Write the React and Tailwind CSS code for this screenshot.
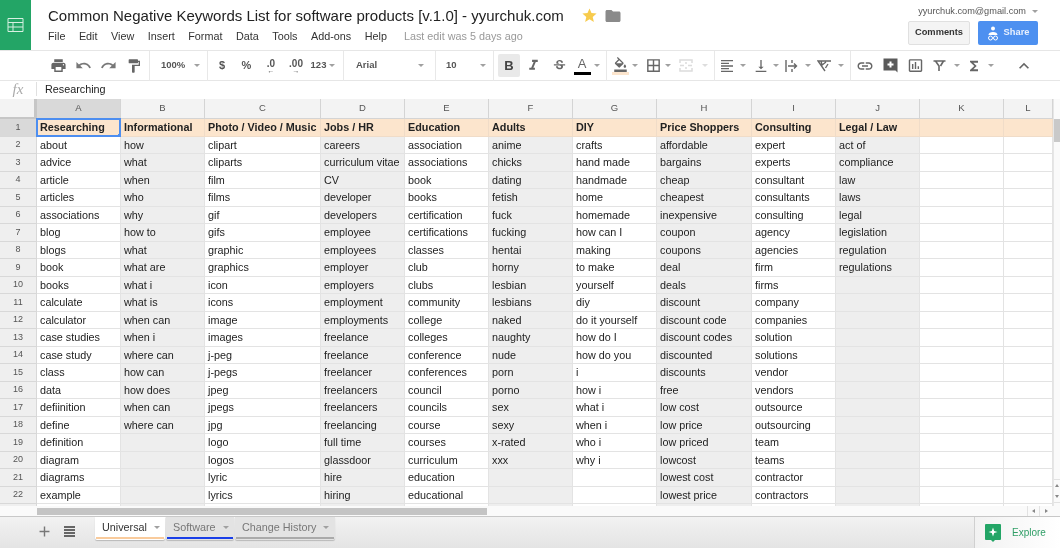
import React from "react";
import {
  MdPrint, MdUndo, MdRedo, MdFormatPaint, MdFormatItalic, MdStrikethroughS, MdFormatColorFill,
  MdBorderAll, MdFormatAlignLeft, MdVerticalAlignBottom, MdLink, MdInsertChartOutlined,
  MdKeyboardArrowUp, MdStar, MdFolder, MdAdd, MdFunctions,
} from "react-icons/md";

const columns = [
  ["Researching", "about", "advice", "article", "articles", "associations", "blog", "blogs", "book", "books", "calculate", "calculator", "case studies", "case study", "class", "data", "defiinition", "define", "definition", "diagram", "diagrams", "example"],
  ["Informational", "how", "what", "when", "who", "why", "how to", "what", "what are", "what i", "what is", "when can", "when i", "where can", "how can", "how does", "when can", "where can"],
  ["Photo / Video / Music", "clipart", "cliparts", "film", "films", "gif", "gifs", "graphic", "graphics", "icon", "icons", "image", "images", "j-peg", "j-pegs", "jpeg", "jpegs", "jpg", "logo", "logos", "lyric", "lyrics"],
  ["Jobs / HR", "careers", "curriculum vitae", "CV", "developer", "developers", "employee", "employees", "employer", "employers", "employment", "employments", "freelance", "freelance", "freelancer", "freelancers", "freelancers", "freelancing", "full time", "glassdoor", "hire", "hiring"],
  ["Education", "association", "associations", "book", "books", "certification", "certifications", "classes", "club", "clubs", "community", "college", "colleges", "conference", "conferences", "council", "councils", "course", "courses", "curriculum", "education", "educational"],
  ["Adults", "anime", "chicks", "dating", "fetish", "fuck", "fucking", "hentai", "horny", "lesbian", "lesbians", "naked", "naughty", "nude", "porn", "porno", "sex", "sexy", "x-rated", "xxx"],
  ["DIY", "crafts", "hand made", "handmade", "home", "homemade", "how can I", "making", "to make", "yourself", "diy", "do it yourself", "how do I", "how do you", "i", "how i", "what i", "when i", "who i", "why i"],
  ["Price Shoppers", "affordable", "bargains", "cheap", "cheapest", "inexpensive", "coupon", "coupons", "deal", "deals", "discount", "discount code", "discount codes", "discounted", "discounts", "free", "low cost", "low price", "low priced", "lowcost", "lowest cost", "lowest price"],
  ["Consulting", "expert", "experts", "consultant", "consultants", "consulting", "agency", "agencies", "firm", "firms", "company", "companies", "solution", "solutions", "vendor", "vendors", "outsource", "outsourcing", "team", "teams", "contractor", "contractors"],
  ["Legal / Law", "act of", "compliance", "law", "laws", "legal", "legislation", "regulation", "regulations"],
  [],
  [],
];
const letters = ["A", "B", "C", "D", "E", "F", "G", "H", "I", "J", "K", "L"];
const menus = ["File", "Edit", "View", "Insert", "Format", "Data", "Tools", "Add-ons", "Help"];
const rowNumbers = Array.from({ length: 23 }, (_, i) => i + 1);

function Caret({ light }) {
  return <span className={`inline-block border-x-[3px] border-t-[3px] border-x-transparent ${light ? "border-t-[#dddddd]" : "border-t-[#a0a0a0]"}`} />;
}

function Slot({ w, children }) {
  return <div className={`flex h-full shrink-0 items-center justify-center ${w}`}>{children}</div>;
}

function Group({ w, children }) {
  return <div className={`flex h-[30px] shrink-0 items-center border-r border-[#e8e8e8] ${w}`}>{children}</div>;
}

function Toolbar() {
  const ic = "text-[#666666]";
  return (
    <div className="flex h-[31px] shrink-0 items-center border-y border-[#e6e6e6] bg-white text-[#555555]">
      <Group w="w-[150px] pl-[46px]">
        <Slot w="w-[25px]"><MdPrint size={17} className={ic} /></Slot>
        <Slot w="w-[25px]"><MdUndo size={17} className="text-[#777777]" /></Slot>
        <Slot w="w-[25px]"><MdRedo size={17} className="text-[#777777]" /></Slot>
        <Slot w="w-[25px]"><MdFormatPaint size={16} className={ic} /></Slot>
      </Group>
      <Group w="w-[58px] pl-[11px] gap-[9px]">
        <span className="text-[9.500px] font-bold">100%</span>
        <Caret />
      </Group>
      <Group w="w-[136px] pl-[2px]">
        <Slot w="w-[24px]"><span className="text-[11px] font-bold">$</span></Slot>
        <Slot w="w-[25px]"><span className="text-[11px] font-bold">%</span></Slot>
        <Slot w="w-[24px]">
          <span className="flex flex-col items-center text-[10px] font-bold leading-[9px]">.0<span className="text-[7px] leading-[5px]">←</span></span>
        </Slot>
        <Slot w="w-[26px]">
          <span className="flex flex-col items-center text-[10px] font-bold leading-[9px]">.00<span className="text-[7px] leading-[5px]">→</span></span>
        </Slot>
        <Slot w="w-[28px]">
          <span className="flex items-center gap-[3px] text-[9.500px] font-bold">123<Caret /></span>
        </Slot>
      </Group>
      <Group w="w-[92px] pl-[12px] gap-[40px]">
        <span className="w-[22px] text-[9.500px] font-bold">Arial</span>
        <Caret />
      </Group>
      <Group w="w-[58px] pl-[10px] gap-[22px]">
        <span className="w-[12px] text-[9.500px] font-bold">10</span>
        <Caret />
      </Group>
      <Group w="w-[113px] pl-[4px]">
        <div className="flex h-[23px] w-[22px] shrink-0 items-center justify-center rounded-[2px] bg-[#e9e9e9] text-[13px] font-bold text-[#444444]">B</div>
        <Slot w="w-[26px]"><MdFormatItalic size={17} className={ic} /></Slot>
        <Slot w="w-[26px]"><MdStrikethroughS size={15} className={ic} /></Slot>
        <Slot w="w-[20px]">
          <span className="flex flex-col items-center pt-[1px]">
            <span className="text-[13px] leading-[13px] text-[#666666]">A</span>
            <span className="mt-[2px] h-[3px] w-[17px] bg-black" />
          </span>
        </Slot>
        <Slot w="w-[10px]"><Caret /></Slot>
      </Group>
      <Group w="w-[108px] pl-[4px]">
        <Slot w="w-[18px]">
          <span className="flex flex-col items-center">
            <MdFormatColorFill size={15} className={ic} />
            <span className="h-[3px] w-[17px] bg-[#fce5cd]" />
          </span>
        </Slot>
        <Slot w="w-[12px]"><Caret /></Slot>
        <Slot w="w-[24px]"><MdBorderAll size={17} className={ic} /></Slot>
        <Slot w="w-[6px]"><Caret /></Slot>
        <Slot w="w-[30px]">
          <svg width="14" height="13" viewBox="0 0 14 13" fill="none" stroke="#dcdcdc" strokeWidth="1.5">
            <path d="M1 4V1h12v3M1 9v3h12V9M1 6.500h4M9 6.500h4M7 3v2M7 8v2" />
          </svg>
        </Slot>
        <Slot w="w-[8px]"><Caret light /></Slot>
      </Group>
      <Group w="w-[136px] pl-[2px]">
        <Slot w="w-[20px]"><MdFormatAlignLeft size={16} className={ic} /></Slot>
        <Slot w="w-[12px]"><Caret /></Slot>
        <Slot w="w-[24px]"><MdVerticalAlignBottom size={16} className={ic} /></Slot>
        <Slot w="w-[6px]"><Caret /></Slot>
        <Slot w="w-[26px]">
          <svg width="14" height="14" viewBox="0 0 14 14" fill="none" stroke="#666666" strokeWidth="1.4">
            <path d="M1 1v12M7 1v3M7 10v3M3 7h8M9 4.500 11.500 7 9 9.500" />
          </svg>
        </Slot>
        <Slot w="w-[6px]"><Caret /></Slot>
        <Slot w="w-[26px]">
          <svg width="15" height="13" viewBox="0 0 15 13" fill="none" stroke="#666666" strokeWidth="1.4">
            <path d="M14 2H1l7 10M4 2l1 4 4-3M11 5 8.500 9" />
          </svg>
        </Slot>
        <Slot w="w-[8px]"><Caret /></Slot>
      </Group>
      <div className="flex h-[30px] flex-1 items-center pl-[4px]">
        <Slot w="w-[20px]"><MdLink size={18} className={ic} /></Slot>
        <Slot w="w-[30px]">
          <svg width="15" height="15" viewBox="0 0 15 15">
            <path d="M0 0h14v14l-2-2H0z" fill="#5a5a5a" transform="translate(0.500 0.500)" />
            <path d="M7.500 3.500v6M4.500 6.500h6" stroke="#ffffff" strokeWidth="2" />
          </svg>
        </Slot>
        <Slot w="w-[20px]"><MdInsertChartOutlined size={17} className={ic} /></Slot>
        <Slot w="w-[28px]">
          <svg width="13" height="12" viewBox="0 0 13 12" fill="none" stroke="#666666" strokeWidth="1.6">
            <path d="M0.500 1h12M2.500 1 6 6v5M10.500 1 7.500 6" />
          </svg>
        </Slot>
        <Slot w="w-[8px]"><Caret /></Slot>
        <Slot w="w-[26px]"><MdFunctions size={16} className={ic} /></Slot>
        <Slot w="w-[8px]"><Caret /></Slot>
        <Slot w="w-[58px]"><MdKeyboardArrowUp size={20} className={ic} /></Slot>
      </div>
    </div>
  );
}

function Header() {
  return (
    <div className="flex h-[50px] shrink-0 bg-white">
      <div className="flex h-[50px] w-[31px] shrink-0 items-center justify-center bg-[#23a566]">
        <svg width="17" height="14" viewBox="0 0 17 14" fill="none" stroke="#d8f0e2" strokeWidth="1">
          <path d="M1 .5h15v13H1zM1 4.500h15M1 9h15M6 4.500v9" />
        </svg>
      </div>
      <div className="min-w-0 flex-1 pl-[17px]">
        <div className="flex items-center pt-[5px]">
          <span className="whitespace-nowrap text-[15px] leading-[21px] text-[#222222]">Common Negative Keywords List for software products [v.1.0] - yyurchuk.com</span>
          <MdStar size={17} className="ml-[17px] text-[#f7cb4d]" />
          <MdFolder size={18} className="ml-[6px] text-[#8a8a8a]" />
        </div>
        <div className="flex items-center pt-[2px] text-[10.800px] leading-[16px] text-[#333333]">
          <div className="flex gap-[13.500px]">
            {menus.map(m => <span key={m}>{m}</span>)}
          </div>
          <span className="ml-[17px] text-[#999999]">Last edit was 5 days ago</span>
        </div>
      </div>
      <div className="flex w-[160px] shrink-0 flex-col items-end pr-[22px] pt-[4px]">
        <div className="flex items-center gap-[6px] whitespace-nowrap text-[9.200px] leading-[14px] text-[#555555]">
          yyurchuk.com@gmail.com
          <Caret />
        </div>
        <div className="mt-[3px] flex gap-[8px]">
          <div className="flex h-[24px] w-[62px] items-center justify-center rounded-[2px] border border-[#e0e0e0] bg-[#f4f4f4] text-[9.300px] font-bold text-[#333333]">Comments</div>
          <div className="flex h-[24px] w-[60px] items-center justify-center gap-[5px] rounded-[2px] bg-[#4d90f0] text-[9.300px] font-bold text-[#e8f0fe]">
            <svg width="12" height="15" viewBox="0 0 12 15" fill="#ffffff">
              <circle cx="6" cy="2.500" r="2" />
              <path d="M1.500 9c0-2 2-3 4.500-3s4.500 1 4.500 3z" />
              <circle cx="3.500" cy="12" r="2" fill="none" stroke="#ffffff" />
              <circle cx="8.500" cy="12" r="2" fill="none" stroke="#ffffff" />
            </svg>
            Share
          </div>
        </div>
      </div>
    </div>
  );
}

function ColumnHeader({ letter, index }) {
  const active = index === 0;
  return (
    <div className={`flex items-center justify-center border-b border-r border-[#d4d4d4] text-[9.500px] text-[#555555] ${active ? "bg-[#d9d9d9]" : "bg-[#f3f3f3]"}`}>
      {letter}
    </div>
  );
}

function Cell({ text, row, col }) {
  const header = row === 1;
  const selected = header && col === 0;
  const shaded = col % 2 === 1 && col < 10;
  const bg = header ? "bg-[#fce5cd]" : shaded ? "bg-[#eeeeee]" : "bg-white";
  const line = header ? "border-[#f0dcc8]" : "border-[#e3e3e3]";
  return (
    <div className={`relative overflow-visible whitespace-nowrap border-b border-r pl-[3px] leading-[17px] ${bg} ${line} ${header ? "font-bold" : ""}`}>
      {text}
      {selected && (
        <>
          <span className="absolute -left-px -top-px bottom-[-1px] right-[-1px] border-2 border-[#4d8ef0]" />
          <span className="absolute bottom-[-3px] right-[-3px] h-[5px] w-[5px] bg-[#4d8ef0]" />
        </>
      )}
    </div>
  );
}

function Sheet() {
  return (
    <div className="flex h-[407px] shrink-0 overflow-hidden">
      <div className="grid w-[1053px] shrink-0 grid-cols-[37px_84px_84px_116px_84px_84px_84px_84px_95px_84px_84px_84px_49px] grid-rows-[20px_repeat(23,17.5px)] text-[10.800px] text-[#222222]">
        <div className="border-b-2 border-r-[3px] border-[#c6c6c6] bg-[#f3f3f3]" />
        {letters.map((l, i) => <ColumnHeader key={l} letter={l} index={i} />)}
        {rowNumbers.map(r => (
          <React.Fragment key={r}>
            <div className={`flex items-center justify-center border-b border-r border-[#d8d8d8] text-[9px] text-[#555555] ${r === 1 ? "bg-[#d9d9d9]" : "bg-[#efefef]"}`}>
              {r < 23 ? r : ""}
            </div>
            {columns.map((c, i) => <Cell key={i} text={c[r - 1] || ""} row={r} col={i} />)}
          </React.Fragment>
        ))}
      </div>
      <div className="flex h-full w-[7px] flex-col border-l border-[#e6e6e6] bg-[#fafafa]">
        <div className="mt-[20px] h-[23px] w-full shrink-0 bg-[#c9c9c9]" />
        <div className="mb-[3px] mt-auto flex h-[24px] flex-col items-center justify-around border-y border-[#e2e2e2]">
          <span className="border-x-[2px] border-b-[3px] border-x-transparent border-b-[#888888]" />
          <span className="border-x-[2px] border-t-[3px] border-x-transparent border-t-[#888888]" />
        </div>
      </div>
    </div>
  );
}

function HorizontalScroll() {
  return (
    <div className="flex h-[11px] shrink-0 items-center border-b border-[#c8c8c8] bg-[#fafafa] pl-[37px]">
      <div className="h-[7px] w-[450px] bg-[#c4c4c4]" />
      <div className="ml-auto flex h-full">
        <span className="flex w-[12px] items-center justify-center border-l border-[#e2e2e2]">
          <span className="border-y-[2px] border-r-[3px] border-y-transparent border-r-[#888888]" />
        </span>
        <span className="mr-[7px] flex w-[14px] items-center justify-center border-l border-[#e2e2e2]">
          <span className="border-y-[2px] border-l-[3px] border-y-transparent border-l-[#888888]" />
        </span>
      </div>
    </div>
  );
}

function Tab({ label, width, active, underline }) {
  return (
    <div className={`flex h-[23px] flex-col justify-between rounded-b-[2px] shadow-[0_1px_1px_rgba(0,0,0,0.2)] ${width} ${active ? "bg-white" : "bg-[#e3e3e3]"}`}>
      <div className={`flex items-center gap-[7px] whitespace-nowrap pl-[7px] pt-[2px] text-[10.800px] leading-[16px] ${active ? "text-[#333333]" : "text-[#777777]"}`}>
        {label}
        <Caret />
      </div>
      <div className={`mx-[1px] mb-[1px] h-[2px] ${underline}`} />
    </div>
  );
}

function TabBar() {
  return (
    <div className="flex h-[31px] shrink-0 bg-gradient-to-b from-[#f2f2f2] to-[#e4e4e4]">
      <div className="flex w-[95px] shrink-0 items-center pb-[2px] pl-[36px] text-[#777777]">
        <MdAdd size={17} />
        <span className="ml-[11px] flex w-[11px] flex-col gap-[1px]">
          <span className="h-[2px] bg-[#666666]" />
          <span className="h-[2px] bg-[#666666]" />
          <span className="h-[2px] bg-[#666666]" />
          <span className="h-[2px] bg-[#666666]" />
        </span>
      </div>
      <div className="flex gap-[1px]">
        <Tab label="Universal" width="w-[70px]" active underline="bg-[#f9cb9c]" />
        <Tab label="Software" width="w-[68px]" underline="bg-[#1a3fe8]" />
        <Tab label="Change History" width="w-[100px]" underline="bg-[#aaaaaa]" />
      </div>
      <div className="ml-auto flex w-[86px] shrink-0 items-center gap-[11px] border-l border-[#d0d0d0] bg-gradient-to-r from-[#f2f2f2] to-white pl-[10px]">
        <svg width="16" height="18" viewBox="0 0 16 18">
          <path d="M1 0h14a1 1 0 0 1 1 1v14a1 1 0 0 1-1 1h-5l-2 2-2-2H1a1 1 0 0 1-1-1V1a1 1 0 0 1 1-1z" fill="#23a566" />
          <path d="M8 3.500 9.200 7 12.500 8 9.200 9 8 12.500 6.800 9 3.500 8 6.800 7z" fill="#ffffff" />
        </svg>
        <span className="text-[10px] text-[#2f9e66]">Explore</span>
      </div>
    </div>
  );
}

export default function App() {
  return (
    <div className="flex h-[548px] w-[1060px] flex-col overflow-hidden bg-white font-['Liberation_Sans',Arial,sans-serif] blur-[0.3px]">
      <Header />
      <Toolbar />
      <div className="flex h-[18px] shrink-0 items-center pb-[2px]">
        <span className="w-[36px] text-center font-['Liberation_Serif',serif] text-[15px] italic leading-[18px] text-[#aaaaaa]">fx</span>
        <span className="h-[14px] border-l border-[#e0e0e0]" />
        <span className="pl-[8px] text-[10.800px] text-[#222222]">Researching</span>
      </div>
      <Sheet />
      <HorizontalScroll />
      <TabBar />
    </div>
  );
}
